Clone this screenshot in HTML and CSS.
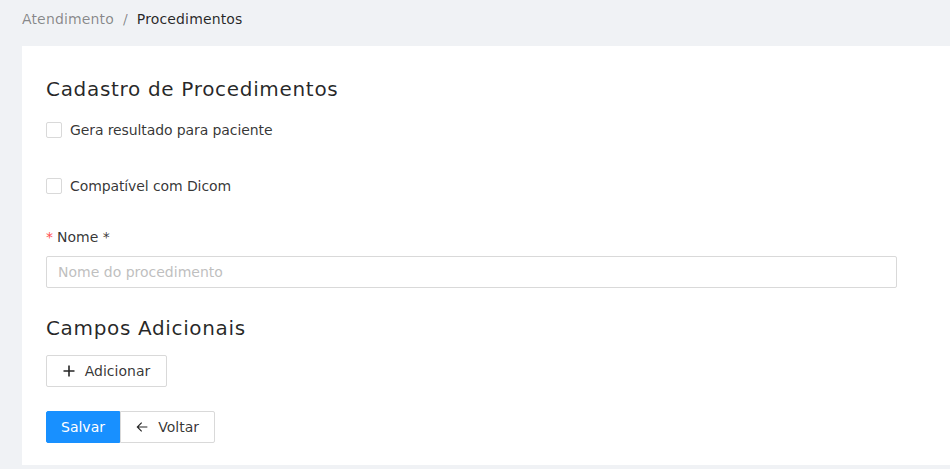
FILE: index.html
```html
<!DOCTYPE html>
<html lang="pt">
<head>
<meta charset="utf-8">
<title>Procedimentos</title>
<link rel="stylesheet" href="styles.css">
</head>
<body>
<div class="page">
  <nav class="breadcrumb">
    <span class="crumb-link">Atendimento</span>
    <span class="crumb-sep">/</span>
    <span class="crumb-current">Procedimentos</span>
  </nav>
  <main class="card">
    <h3 class="title">Cadastro de Procedimentos</h3>
    <label class="check-row">
      <span class="checkbox"></span>
      <span class="check-label">Gera resultado para paciente</span>
    </label>
    <label class="check-row">
      <span class="checkbox"></span>
      <span class="check-label">Compatível com Dicom</span>
    </label>
    <div class="field">
      <label class="field-label"><span class="req">*</span>Nome *</label>
      <input class="input" type="text" placeholder="Nome do procedimento">
    </div>
    <h3 class="subtitle">Campos Adicionais</h3>
    <button class="btn btn-add" type="button">
      <svg class="icon" viewBox="0 0 12 12" width="12" height="12"><path d="M6 0.5v11M0.5 6h11" stroke="#262626" stroke-width="1.6" fill="none"/></svg>
      <span>Adicionar</span>
    </button>
    <div class="actions">
      <button class="btn btn-primary" type="button">Salvar</button>
      <button class="btn btn-back" type="button">
        <svg class="icon" viewBox="0 0 14 12" width="13" height="12"><path d="M13 6H1.5M6.5 1L1.5 6l5 5" stroke="#262626" stroke-width="1.3" fill="none"/></svg>
        <span>Voltar</span>
      </button>
    </div>
  </main>
</div>
</body>
</html>
```
FILE: styles.css
```css
* { box-sizing: border-box; }
html, body { margin: 0; padding: 0; }
body {
  background: #f0f2f5;
  font-family: "DejaVu Sans", "Liberation Sans", sans-serif;
  font-size: 14px;
  color: rgba(0,0,0,0.85);
  overflow: hidden;
}
.page {
  padding: 8px 0 0 22px;
}
.breadcrumb {
  height: 22px;
  line-height: 22px;
  font-size: 14px;
  display: flex;
  gap: 9px;
  letter-spacing: 0.15px;
  margin-bottom: 16px;
}
.crumb-link { color: rgba(0,0,0,0.45); }
.crumb-sep { color: rgba(0,0,0,0.45); }
.crumb-current { color: rgba(0,0,0,0.85); }
.card {
  background: #fff;
  padding: 29px 24px 22px 24px;
  display: flex;
  flex-direction: column;
  align-items: flex-start;
}
.title {
  margin: 0 0 11px 0;
  font-size: 20px;
  line-height: 28px;
  font-weight: 400;
  letter-spacing: 0.68px;
  color: rgba(0,0,0,0.85);
}
.check-row {
  display: flex;
  align-items: center;
  height: 32px;
  margin-bottom: 24px;
  gap: 8px;
}
.checkbox {
  width: 16px;
  height: 16px;
  border: 1px solid #d9d9d9;
  border-radius: 2px;
  background: #fff;
}
.check-label { font-size: 14px; color: rgba(0,0,0,0.8); letter-spacing: -0.1px; }
.field {
  display: flex;
  flex-direction: column;
  margin-bottom: 24px;
}
.field-label {
  line-height: 22px;
  padding-bottom: 8px;
  color: rgba(0,0,0,0.8);
}
.req {
  color: #ff4d4f;
  margin-right: 4px;
}
.input {
  width: 851px;
  height: 32px;
  border: 1px solid #d9d9d9;
  border-radius: 2px;
  padding: 4px 11px;
  font: inherit;
  font-size: 14px;
  color: rgba(0,0,0,0.85);
  outline: none;
}
.input::placeholder { color: #bfbfbf; }
.subtitle {
  margin: 2px 0 13px 0;
  font-size: 20px;
  line-height: 28px;
  font-weight: 400;
  letter-spacing: 0.65px;
  color: rgba(0,0,0,0.85);
}
.btn {
  height: 32px;
  padding: 0 15px;
  border: 1px solid #d9d9d9;
  border-radius: 2px;
  background: #fff;
  font: inherit;
  font-size: 14px;
  color: rgba(0,0,0,0.8);
  display: inline-flex;
  align-items: center;
  gap: 10px;
  cursor: pointer;
}
.btn-add { margin-bottom: 24px; width: 121px; justify-content: center; }
.actions { display: flex; }
.btn-primary {
  background: #1890ff;
  border-color: #1890ff;
  color: #fff;
  border-radius: 2px 0 0 2px;
  width: 74px;
  justify-content: center;
}
.btn-back {
  border-radius: 0 2px 2px 0;
  width: 95px;
  justify-content: center;
}
.icon { display: block; }
```
